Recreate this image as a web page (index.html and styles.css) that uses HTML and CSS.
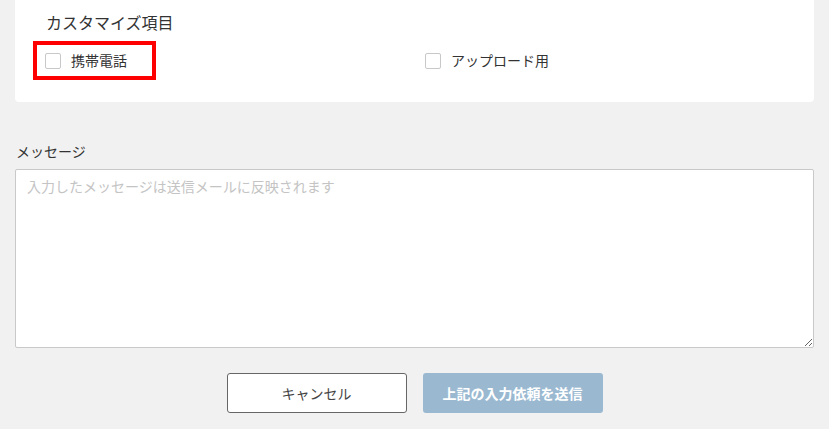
FILE: index.html
```html
<!DOCTYPE html>
<html lang="ja">
<head>
<meta charset="utf-8">
<link rel="stylesheet" href="styles.css">
</head>
<body>
<div class="page">
  <section class="card">
    <h2 class="card-title">カスタマイズ項目</h2>
    <div class="options">
      <label class="option option-highlight">
        <span class="box"></span>
        <span class="option-text">携帯電話</span>
      </label>
      <label class="option">
        <span class="box"></span>
        <span class="option-text">アップロード用</span>
      </label>
    </div>
  </section>

  <div class="field">
    <div class="field-label">メッセージ</div>
    <textarea class="message" placeholder="入力したメッセージは送信メールに反映されます"></textarea>
  </div>

  <div class="actions">
    <button class="btn btn-cancel">キャンセル</button>
    <button class="btn btn-submit">上記の入力依頼を送信</button>
  </div>
</div>
</body>
</html>
```

FILE: styles.css
```css
* { box-sizing: border-box; }
html, body {
  margin: 0;
  padding: 0;
  background: #f1f1f1;
  font-family: "Noto Sans CJK JP", "Noto Sans", sans-serif;
  color: #333;
}
.page {
  padding: 0 15px;
}
.card {
  background: #fff;
  border-radius: 0 0 4px 4px;
  padding: 10px 22px 26px 22px;
}
.card-title {
  margin: 0;
  padding-left: 9px;
  font-size: 16px;
  font-weight: 400;
  line-height: 24px;
  color: #333;
}
.options {
  display: grid;
  grid-template-columns: 380px 1fr;
  margin-top: 11px;
}
.option {
  display: flex;
  align-items: center;
  gap: 10px;
  height: 31px;
  padding: 0 8px;
  font-size: 14px;
  line-height: 21px;
  color: #333;
}
.option-highlight {
  width: 115px;
  outline: 4px solid #ff0000;
}
.box {
  width: 16px;
  height: 16px;
  border: 1px solid #c8c8c8;
  border-radius: 2px;
  background: #fff;
  flex: none;
}
.field {
  margin-top: 39px;
}
.field-label {
  font-size: 14px;
  line-height: 21px;
  margin-bottom: 7px;
  padding-left: 1px;
  color: #333;
}
.message {
  display: block;
  width: 100%;
  height: 179px;
  border: 1px solid #c9c9c9;
  border-radius: 2px;
  padding: 6px 11px;
  font-family: "Noto Sans CJK JP", "Noto Sans", sans-serif;
  font-size: 14px;
  line-height: 21px;
  background: #fff;
  resize: vertical;
}
.message::placeholder {
  color: #c4c4c4;
}
.actions {
  display: flex;
  justify-content: center;
  gap: 16px;
  margin-top: 25px;
}
.btn {
  width: 180px;
  height: 40px;
  font-family: "Noto Sans CJK JP", "Noto Sans", sans-serif;
  font-size: 14px;
  border-radius: 3px;
  cursor: pointer;
}
.btn-cancel {
  background: #fff;
  border: 1px solid #666;
  color: #444;
}
.btn-submit {
  background: #9ab9d1;
  border: none;
  color: #fff;
  font-weight: 700;
}
```
